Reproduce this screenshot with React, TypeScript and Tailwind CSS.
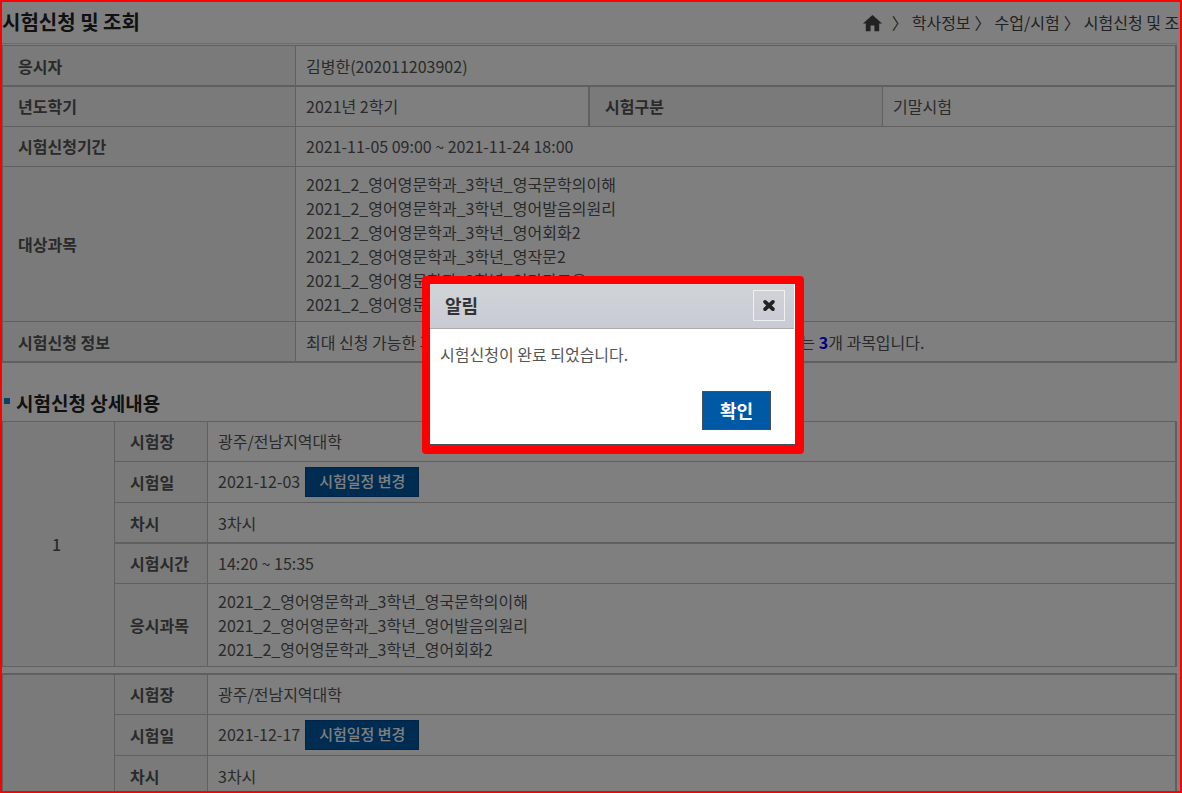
import { MdHome } from "react-icons/md";
import clsx from "clsx";

const subjects = [
  "2021_2_영어영문학과_3학년_영국문학의이해",
  "2021_2_영어영문학과_3학년_영어발음의원리",
  "2021_2_영어영문학과_3학년_영어회화2",
  "2021_2_영어영문학과_3학년_영작문2",
  "2021_2_영어영문학과_3학년_인간과교육",
  "2021_2_영어영문학과_3학년_세계의역사",
];

const th = "border-[#c0c0c0] bg-[#f4f4f4] px-[15px] text-left font-bold text-[#555]";
const td = "border-[#c0c0c0] px-[10px] text-[#555]";

function Summary() {
  return (
    <table className="w-full table-fixed border-separate border-spacing-0 border-l border-t border-[#c0c0c0]">
      <colgroup>
        <col className="w-[293px]" />
        <col />
        <col className="w-[293px]" />
        <col />
      </colgroup>
      <tbody>
        <tr className="h-[41px]">
          <th scope="row" className={clsx(th, "border-b-2 border-r")}>응시자</th>
          <td colSpan={3} className={clsx(td, "border-b-2 border-r-2")}>김병한(202011203902)</td>
        </tr>
        <tr className="h-10">
          <th scope="row" className={clsx(th, "border-b border-r pb-[2px]")}>년도학기</th>
          <td className={clsx(td, "border-b border-r-2 pb-[2px]")}>2021년 2학기</td>
          <th scope="row" className={clsx(th, "border-b border-r pb-[2px]")}>시험구분</th>
          <td className={clsx(td, "border-b border-r-2 pb-[2px]")}>기말시험</td>
        </tr>
        <tr className="h-10">
          <th scope="row" className={clsx(th, "border-b border-r pb-[2px]")}>시험신청기간</th>
          <td colSpan={3} className={clsx(td, "border-b border-r-2 pb-[2px]")}>2021-11-05 09:00 ~ 2021-11-24 18:00</td>
        </tr>
        <tr>
          <th scope="row" className={clsx(th, "border-b border-r")}>대상과목</th>
          <td colSpan={3} className={clsx(td, "border-b border-r-2 py-[5px]")}>
            {subjects.map((s) => (
              <div key={s}>{s}</div>
            ))}
          </td>
        </tr>
        <tr className="h-[41px]">
          <th scope="row" className={clsx(th, "border-b-2 border-r")}>시험신청 정보</th>
          <td colSpan={3} className={clsx(td, "border-b-2 border-r-2")}>
            최대 신청 가능한 과목 수는 6개 과목이며, 현재 추가로 신청이 가능한 과목수는{" "}
            <b className="text-[#00f]">3</b>개 과목입니다.
          </td>
        </tr>
      </tbody>
    </table>
  );
}

type Exam = { no: number; date: string; thickTop?: boolean; subjects: string[] };

function ExamTable({ no, date, thickTop, subjects }: Exam) {
  return (
    <table
      className={clsx(
        "w-full table-fixed border-separate border-spacing-0 border-l border-[#c0c0c0]",
        thickTop ? "border-t-2" : "border-t",
      )}
    >
      <colgroup>
        <col className="w-[112px]" />
        <col className="w-[93px]" />
        <col />
      </colgroup>
      <tbody>
        <tr className="h-10">
          <th scope="rowgroup" rowSpan={5} className="border-b border-r border-[#c0c0c0] bg-[#f4f4f4] pr-1 text-center font-medium text-[#555]">
            {no}
          </th>
          <th scope="row" className={clsx(th, "border-b border-r pb-[2px]")}>시험장</th>
          <td className={clsx(td, "border-b border-r-2 pb-[2px]")}>광주/전남지역대학</td>
        </tr>
        <tr className="h-[41px]">
          <th scope="row" className={clsx(th, "border-b border-r")}>시험일</th>
          <td className={clsx(td, "border-b border-r-2")}>
            <div className="flex items-center gap-[5px]">
              <span className="pb-[2px]">{date}</span>
              <button type="button" className="flex h-[30px] items-center border border-[#004a90] bg-[#0059a5] px-[13px] pb-[2px] text-[15px] font-medium leading-6 text-white">
                시험일정 변경
              </button>
            </div>
          </td>
        </tr>
        <tr className="h-[41px]">
          <th scope="row" className={clsx(th, "border-b-2 border-r")}>차시</th>
          <td className={clsx(td, "border-b-2 border-r-2")}>3차시</td>
        </tr>
        <tr className="h-10">
          <th scope="row" className={clsx(th, "border-b border-r pb-[2px]")}>시험시간</th>
          <td className={clsx(td, "border-b border-r-2 pb-[2px]")}>14:20 ~ 15:35</td>
        </tr>
        <tr>
          <th scope="row" className={clsx(th, "border-b border-r")}>응시과목</th>
          <td className={clsx(td, "border-b border-r-2 py-[5px]")}>
            {subjects.map((s) => (
              <div key={s}>{s}</div>
            ))}
          </td>
        </tr>
      </tbody>
    </table>
  );
}

function Alert() {
  return (
    <div className="fixed left-[422px] top-[276px] rounded bg-[#f00] p-2">
      <div
        role="dialog"
        aria-modal="true"
        aria-labelledby="alert-title"
        className="w-[366px] border-b-2 border-r border-[#444f60] bg-white"
      >
        <header className="mr-px flex h-[45px] items-center justify-between border-b border-[#aaa] bg-linear-to-b from-[#d0d3d6] to-[#c8cbd4] pb-[2px] pl-[15px] pr-[9px]">
          <h2 id="alert-title" className="text-[18px] font-bold text-[#333]">알림</h2>
          <button type="button" aria-label="닫기" className="flex h-[31px] w-8 items-center justify-center border border-[#f0f0f0] text-[#222]">
            <svg width="14" height="14" viewBox="0 0 14 14" stroke="currentColor" strokeWidth="3.8" strokeLinecap="round" aria-hidden="true">
              <path d="M3.1 3.9 10.9 11.1M10.9 3.9 3.1 11.1" />
            </svg>
          </button>
        </header>
        <div className="px-[10px] pt-[13px] text-[#555]">시험신청이 완료 되었습니다.</div>
        <div className="flex justify-end pb-[14px] pr-6 pt-[25px]">
          <button type="button" className="flex h-[39px] items-center border border-[#444f60] bg-[#0059a5] px-[17px] pb-[2px] text-[18px] font-bold leading-6 text-white">
            확인
          </button>
        </div>
      </div>
    </div>
  );
}

export default function App() {
  return (
    <div className="h-screen overflow-hidden bg-white font-['Noto_Sans_CJK_KR',sans-serif] text-[16px] leading-6">
      <main className="pl-[2px] pr-[5px] pt-[2px]">
        <div className="mb-px flex h-[42px] items-center justify-between whitespace-nowrap border-b border-[#d8d8d8] pb-[2px]">
          <h1 className="text-[20px] font-bold text-[#222]">시험신청 및 조회</h1>
          <nav aria-label="현재 위치" className="-mr-[17px] flex items-center text-[#444]">
            <a href="#" aria-label="홈" className="mr-1 pt-[3px]">
              <MdHome size={23} />
            </a>
            <span className="mx-1">〉</span>
            <a href="#">학사정보</a>
            <span className="mx-1">〉</span>
            <a href="#">수업/시험</a>
            <span className="mx-1">〉</span>
            <a href="#">시험신청 및 조회</a>
          </nav>
        </div>
        <Summary />
        <div className="flex h-[58px] items-end gap-[6px] pb-1 pl-[2px]">
          <span className="mb-[13px] size-[6px] bg-[#1582c8]" />
          <h2 className="text-[19px] font-bold leading-7 text-[#222]">시험신청 상세내용</h2>
        </div>
        <div className="flex flex-col gap-[6px]">
          <ExamTable no={1} date="2021-12-03" subjects={subjects.slice(0, 3)} />
          <ExamTable no={2} date="2021-12-17" thickTop subjects={subjects.slice(3)} />
        </div>
      </main>
      <div className="fixed inset-0 border-2 border-[#f00] bg-black/50 bg-clip-padding" />
      <Alert />
    </div>
  );
}
